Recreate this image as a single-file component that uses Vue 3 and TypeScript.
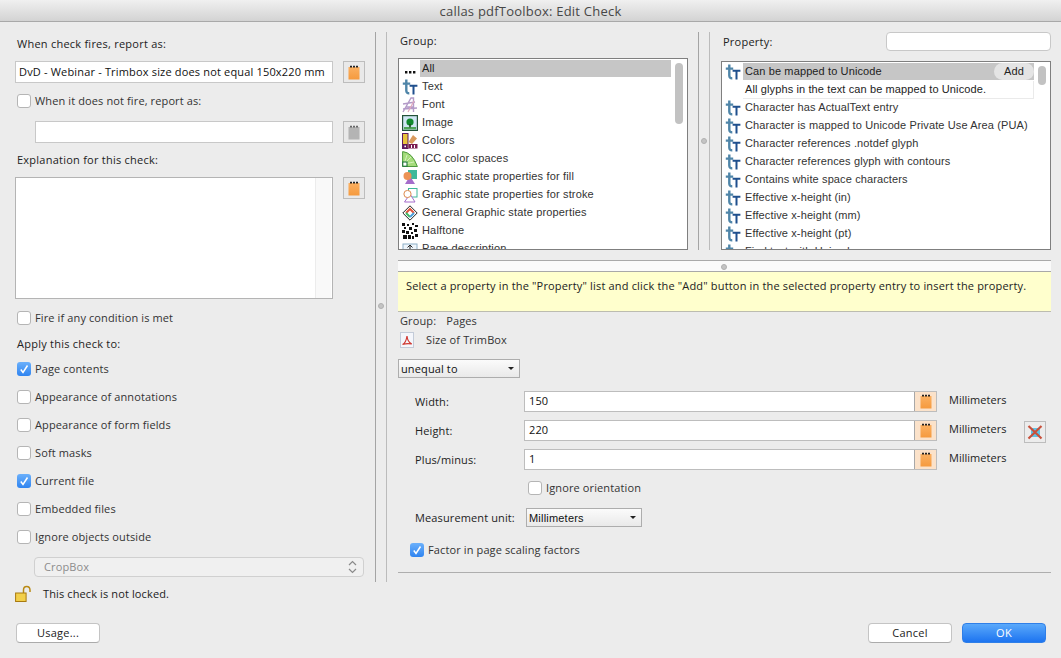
<script setup lang="ts">
const groups = [
  { icon: 'dots', label: 'All', selected: true },
  { icon: 'text', label: 'Text' },
  { icon: 'font', label: 'Font' },
  { icon: 'image', label: 'Image' },
  { icon: 'colors', label: 'Colors' },
  { icon: 'icc', label: 'ICC color spaces' },
  { icon: 'fill', label: 'Graphic state properties for fill' },
  { icon: 'stroke', label: 'Graphic state properties for stroke' },
  { icon: 'general', label: 'General Graphic state properties' },
  { icon: 'halftone', label: 'Halftone' },
  { icon: 'page', label: 'Page description' },
]
const properties = [
  'Character has ActualText entry',
  'Character is mapped to Unicode Private Use Area (PUA)',
  'Character references .notdef glyph',
  'Character references glyph with contours',
  'Contains white space characters',
  'Effective x-height (in)',
  'Effective x-height (mm)',
  'Effective x-height (pt)',
  'Find text with Unicode sequence',
]
const scopes = [
  { label: 'Page contents', on: true },
  { label: 'Appearance of annotations', on: false },
  { label: 'Appearance of form fields', on: false },
  { label: 'Soft masks', on: false },
  { label: 'Current file', on: true },
  { label: 'Embedded files', on: false },
  { label: 'Ignore objects outside', on: false },
]
const values = [
  { label: 'Width:', value: '150' },
  { label: 'Height:', value: '220' },
  { label: 'Plus/minus:', value: '1' },
]
</script>

<template>
  <div class="window">
    <svg class="defs" width="0" height="0" aria-hidden="true">
      <defs>
        <linearGradient id="org" x1="0" y1="0" x2="0" y2="1"><stop offset="0" stop-color="#fbb061" /><stop offset="1" stop-color="#f59a3e" /></linearGradient>
        <symbol id="i-note" viewBox="0 0 14 15">
          <rect x="1.500" y="2" width="11" height="12.500" fill="url(#org)" />
          <path d="M3 .8h2v1.800H3zM6 .8h2v1.800H6zM9 .8h2v1.800H9z" fill="#222" />
        </symbol>
        <symbol id="i-note-off" viewBox="0 0 14 15">
          <rect x="1.500" y="2" width="11" height="12.500" fill="#b4b4b4" />
          <path d="M3 .8h2v1.800H3zM6 .8h2v1.800H6zM9 .8h2v1.800H9z" fill="#666" />
        </symbol>
        <symbol id="i-dots" viewBox="0 0 16 16"><path d="M3 10h2.400v2.400H3zM7 10h2.400v2.400H7zM11 10h2.400v2.400H11z" fill="#111" /></symbol>
        <symbol id="i-text" viewBox="0 0 16 16">
          <path d="M.8 4.600h7.400M4.300 .6v10.800q0 3 3 2.800" fill="none" stroke="#4f85a8" stroke-width="2.400" />
          <path d="M7.600 6.800h7.800M11.500 6.800v8.800" fill="none" stroke="#1f4f8d" stroke-width="2" />
        </symbol>
        <symbol id="i-font" viewBox="0 0 16 16">
          <path d="M1 15 9 1h2.500v14M4 10h8M1 7l12-2M1 12l14-1" fill="none" stroke="#b39ac8" stroke-width="1.400" />
          <path d="M6 15 12 4" stroke="#e0a8bc" stroke-width="1.200" />
        </symbol>
        <symbol id="i-image" viewBox="0 0 16 16">
          <rect x=".6" y=".6" width="14.800" height="14.800" fill="#cfe6f4" stroke="#23533a" stroke-width="1.200" />
          <rect x="2" y="12" width="12" height="2.400" fill="#4fa659" />
          <circle cx="8" cy="7" r="3.600" fill="#118a2e" />
          <rect x="7.200" y="9" width="1.600" height="3.400" fill="#1a4a1e" />
        </symbol>
        <symbol id="i-colors" viewBox="0 0 16 16">
          <rect x=".5" y=".5" width="5.500" height="15" fill="#e8c33c" stroke="#5e1a5e" stroke-width="1" />
          <rect x="1" y="11" width="4.500" height="4.500" fill="#5e1a5e" />
          <rect x="2.400" y="12.600" width="1.600" height="1.600" fill="#fff" />
          <path d="M6.500 9 11 2l4 3.500-5 5.500z" fill="#d99a5d" />
          <path d="M6.500 15.500V11h9v4.500z" fill="#7b1d52" />
          <path d="M9.500 12v3M12.500 12v3" stroke="#fff" />
        </symbol>
        <symbol id="i-icc" viewBox="0 0 16 16">
          <path d="M.6 15.500V.6q9.500.6 14.800 14.900z" fill="#a5dc7c" stroke="#4f9a3e" />
          <path d="M2 13 9 6M2 13l10-2M2 13l3-9" stroke="#d9f2c4" stroke-width=".9" />
          <rect x=".8" y="11" width="4.200" height="4.200" fill="#fff" stroke="#0f6a2c" />
        </symbol>
        <symbol id="i-fill" viewBox="0 0 16 16">
          <rect x="6" y="1" width="9" height="9" fill="#3fb89a" />
          <path d="M3 15 8 7l5 8z" fill="#a56dcb" />
          <circle cx="5.500" cy="7" r="4" fill="#ec9255" />
        </symbol>
        <symbol id="i-stroke" viewBox="0 0 16 16">
          <rect x="6.500" y="1.500" width="8.500" height="8.500" fill="#fff" stroke="#3fb89a" />
          <path d="M2.500 15 8 7l5 8z" fill="#fff" stroke="#a56dcb" />
          <circle cx="5.500" cy="7" r="3.600" fill="#fff" stroke="#dd8a4e" />
        </symbol>
        <symbol id="i-general" viewBox="0 0 16 16">
          <path d="M8 .8 15.200 8 8 15.200.8 8z" fill="#fff" stroke="#222" stroke-width="1" />
          <path d="M4 8l4-4 4 4" fill="none" stroke="#e2553d" stroke-width="2" />
          <path d="M4 8l4 4" fill="none" stroke="#3dbb62" stroke-width="2" />
          <path d="M12 8l-4 4" fill="none" stroke="#4aa0dd" stroke-width="2" />
        </symbol>
        <symbol id="i-halftone" viewBox="0 0 16 16">
          <rect width="16" height="16" fill="#fff" />
          <path d="M0 0h3v3H0zM5 1h2v2H5zM10 0h2v2h-2zM13 2h3v2h-3zM2 4h2v2H2zM7 4h3v3H7zM12 6h3v3h-3zM0 7h3v3H0zM4 8h3v3H4zM9 9h2v2H9zM13 11h3v3h-3zM1 12h4v4H1zM6 12h3v4H6zM10 13h2v3h-2z" fill="#111" />
        </symbol>
        <symbol id="i-page" viewBox="0 0 16 16">
          <rect x="1" y="3" width="14" height="13" fill="#eef5fb" stroke="#8eb0c8" />
          <path d="M8 4v6M5.500 6.500 8 4l2.500 2.500" fill="none" stroke="#222" />
        </symbol>
        <symbol id="i-pdf" viewBox="0 0 14 16">
          <rect x=".5" y=".5" width="13" height="15" fill="#f4f6fb" stroke="#c3cbd8" />
          <path d="M2.500 12.500Q6 11 7 4q.6 6 4.800 8-5-.8-9.300.5z" fill="none" stroke="#d03a33" stroke-width="1.200" />
        </symbol>
        <symbol id="i-x" viewBox="0 0 16 16">
          <rect x="4" y="4" width="9" height="9" fill="#5fc4e6" />
          <path d="M1.500 2 14.500 14.500M14.500 2 1.500 14.500" stroke="#c8503c" stroke-width="2.200" />
        </symbol>
      </defs>
    </svg>

    <header class="titlebar">callas pdfToolbox: Edit Check</header>

    <div class="content">
      <aside class="left">
        <div class="label first">When check fires, report as:</div>
        <div class="field-row r-a">
          <div class="input wide">DvD - Webinar - Trimbox size does not equal 150x220 mm</div>
          <button class="note-btn"><svg class="note"><use href="#i-note" /></svg></button>
        </div>
        <label class="check r-b"><span class="box"></span>When it does not fire, report as:</label>
        <div class="field-row r-c">
          <div class="input inset"></div>
          <button class="note-btn"><svg class="note"><use href="#i-note-off" /></svg></button>
        </div>
        <div class="label r-d">Explanation for this check:</div>
        <div class="field-row r-e">
          <div class="textarea"><span class="track"></span></div>
          <button class="note-btn"><svg class="note"><use href="#i-note" /></svg></button>
        </div>
        <label class="check r-f"><span class="box"></span>Fire if any condition is met</label>
        <div class="label r-g">Apply this check to:</div>
        <div class="scopes">
          <label v-for="s in scopes" :key="s.label" class="check">
            <span class="box" :class="{ on: s.on }">
              <svg v-if="s.on" viewBox="0 0 14 14"><path d="M3.800 7.500 6 10.500 10.500 3.500" fill="none" stroke="#fff" stroke-width="1.500" /></svg>
            </span>{{ s.label }}
          </label>
        </div>
        <div class="stepper">
          <span>CropBox</span>
          <svg width="9" height="14" viewBox="0 0 9 14"><path d="M1 5l3.500-3.500L8 5M1 9l3.500 3.500L8 9" fill="none" stroke="#8a8a8a" stroke-width="1.200" /></svg>
        </div>
        <div class="lock">
          <svg width="17" height="18" viewBox="0 0 17 18">
            <path d="M8.500 8V5q0-3.500 3.200-3.500T15 5v2" fill="none" stroke="#b98a14" stroke-width="1.500" />
            <rect x=".6" y="8" width="10.500" height="8.500" fill="#f2cf4a" stroke="#a87a10" />
          </svg>
          <span>This check is not locked.</span>
        </div>
      </aside>

      <div class="vsplit long"><span class="grip"></span></div>

      <main class="right">
        <section class="lists">
          <div class="col group-col">
            <div class="label group-label">Group:</div>
            <div class="list group-list">
              <div v-for="g in groups" :key="g.label" class="item">
                <svg class="ico"><use :href="'#i-' + g.icon" /></svg>
                <span class="txt" :class="{ sel: g.selected }">{{ g.label }}</span>
              </div>
              <span class="thumb tall"></span>
            </div>
          </div>
          <div class="vsplit short"><span class="grip"></span></div>
          <div class="col prop-col">
            <div class="prop-head">
              <span class="label">Property:</span>
              <div class="search"></div>
            </div>
            <div class="list prop-list">
              <div class="item">
                <svg class="ico"><use href="#i-text" /></svg>
                <span class="txt sel">Can be mapped to Unicode<b class="add">Add</b></span>
              </div>
              <div class="desc">All glyphs in the text can be mapped to Unicode.</div>
              <div v-for="p in properties" :key="p" class="item">
                <svg class="ico"><use href="#i-text" /></svg>
                <span class="txt">{{ p }}</span>
              </div>
              <span class="thumb small"></span>
            </div>
          </div>
        </section>

        <div class="hsplit"><span class="grip"></span></div>
        <div class="hint">Select a property in the "Property" list and click the "Add" button in the selected property entry to insert the property.</div>

        <div class="group-line"><span>Group:</span><span>Pages</span></div>
        <div class="size-line">
          <svg width="14" height="16"><use href="#i-pdf" /></svg>
          <span>Size of TrimBox</span>
        </div>
        <div class="pop op"><span>unequal to</span><i></i></div>

        <div class="values">
          <template v-for="v in values" :key="v.label">
            <span class="v-label">{{ v.label }}</span>
            <div class="v-input">
              <span class="v-text">{{ v.value }}</span>
              <span class="v-note"><svg class="note"><use href="#i-note" /></svg></span>
            </div>
            <span class="v-unit">Millimeters</span>
          </template>
          <button class="x-btn"><svg width="16" height="16"><use href="#i-x" /></svg></button>
        </div>

        <label class="check ignore"><span class="box"></span>Ignore orientation</label>
        <div class="unit-row">
          <span class="unit-label">Measurement unit:</span>
          <div class="pop unit"><span>Millimeters</span><i></i></div>
        </div>
        <label class="check factor">
          <span class="box on"><svg viewBox="0 0 14 14"><path d="M3.800 7.500 6 10.500 10.500 3.500" fill="none" stroke="#fff" stroke-width="1.500" /></svg></span>Factor in page scaling factors
        </label>
        <div class="rule"></div>
      </main>
    </div>

    <footer class="footer">
      <button class="btn">Usage...</button>
      <div class="actions">
        <button class="btn">Cancel</button>
        <button class="btn primary">OK</button>
      </div>
    </footer>
  </div>
</template>

<style>
html, body { margin: 0; background: #ececec; }
</style>

<style scoped>
.window {
  width: 1061px;
  height: 658px;
  overflow: hidden;
  display: flex;
  flex-direction: column;
  background: #ececec;
  color: #2a2a2a;
  font: 11px/16px "Open Sans", "Liberation Sans", sans-serif;
  letter-spacing: .12px;
}
.defs { position: absolute; }
.titlebar {
  height: 21px;
  flex: none;
  border-bottom: 1px solid #a9a9a9;
  background: linear-gradient(#f0f0f0, #d3d3d3);
  text-align: center;
  font-size: 13px;
  letter-spacing: .22px;
  line-height: 22px;
  color: #474747;
}
.content { flex: 1; display: flex; min-height: 0; }
.left { width: 375px; flex: none; padding-left: 15px; box-sizing: border-box; }
.label { padding-left: 2px; height: 16px; letter-spacing: .24px; color: #222; }
.first { margin-top: 14px; }
.field-row { display: flex; gap: 10px; align-items: flex-start; }
.r-a { margin-top: 9px; }
.r-b { margin-top: 11px; }
.r-c { margin-top: 13px; }
.r-d { margin-top: 9px; }
.r-e { margin-top: 9px; }
.r-f { margin-top: 12px; }
.r-g { margin-top: 11px; }
.input {
  box-sizing: border-box;
  height: 22px;
  background: #fff;
  border: 1px solid #c8c8c8;
  line-height: 20px;
  padding-left: 3px;
  color: #111;
}
.wide { width: 318px; letter-spacing: .17px; }
.inset { width: 298px; margin-left: 20px; }
.note-btn {
  box-sizing: border-box;
  width: 22px;
  height: 22px;
  padding: 0;
  border: 1px solid #bdbdbd;
  background: #e9e9e9;
  display: flex;
  align-items: center;
  justify-content: center;
}
.note { width: 14px; height: 15px; display: block; }
.textarea {
  box-sizing: border-box;
  width: 318px;
  height: 122px;
  background: #fff;
  border: 1px solid #b4b4b4;
  display: flex;
  justify-content: flex-end;
}
.track { width: 15px; margin-right: 1px; background: #f9f9f9; border-left: 1px solid #ececec; }
.check {
  display: flex;
  align-items: center;
  height: 14px;
  margin-left: 2px;
  color: #333;
}
.box {
  box-sizing: border-box;
  width: 14px;
  height: 14px;
  flex: none;
  margin-right: 4px;
  background: #fff;
  border: 1px solid #b5b5b5;
  border-radius: 3px;
  display: block;
}
.box.on { border: 0; background: linear-gradient(#6bb0fb, #2f84f0); }
.box svg { width: 14px; height: 14px; display: block; }
.scopes { margin-top: 10px; display: grid; grid-auto-rows: 14px; row-gap: 14px; }
.scopes .check { margin-left: 2px; }
.stepper {
  box-sizing: border-box;
  width: 330px;
  height: 20px;
  margin: 13px 0 0 19px;
  padding: 0 6px 0 9px;
  display: flex;
  align-items: center;
  justify-content: space-between;
  border: 1px solid #d0d0d0;
  border-radius: 4px;
  background: #f0f0f0;
  color: #8c8c8c;
}
.lock { margin-top: 8px; display: flex; align-items: center; height: 18px; }
.lock span { margin-left: 11px; color: #222; }
.vsplit {
  position: relative;
  box-sizing: border-box;
  width: 12px;
  flex: none;
  margin-top: 10px;
  border-left: 1px solid #a4a4a4;
  border-right: 1px solid #bbb;
}
.vsplit.long { height: 550px; }
.vsplit.short { height: 218px; margin-left: 10px; }
.grip {
  position: absolute;
  width: 6px;
  height: 6px;
  border-radius: 50%;
  background: #c4c4c4;
  border: 1px solid #b0b0b0;
  box-sizing: border-box;
}
.vsplit.long .grip { left: 2px; top: 271px; }
.vsplit.short .grip { left: 2px; top: 106px; }
.right { flex: 1; min-width: 0; padding: 0 10px 0 11px; display: flex; flex-direction: column; }
.lists { display: flex; height: 228px; flex: none; }
.col { display: flex; flex-direction: column; }
.group-col { width: 290px; }
.prop-col { width: 330px; margin-left: 11px; }
.group-label { margin-top: 11px; }
.prop-head { margin-top: 10px; height: 19px; display: flex; justify-content: space-between; align-items: center; }
.search {
  box-sizing: border-box;
  width: 165px;
  height: 19px;
  border: 1px solid #c8c8c8;
  border-radius: 4px;
  background: #fff;
}
.list {
  position: relative;
  box-sizing: border-box;
  overflow: hidden;
  background: #fff;
  border: 1px solid #7f7f7f;
  padding-top: 1px;
  font-family: "Liberation Sans", Arial, sans-serif;
  letter-spacing: .12px;
}
.group-list { margin-top: 9px; height: 192px; letter-spacing: .16px; }
.prop-list { margin-top: 10px; height: 189px; }
.item { display: flex; height: 18px; align-items: center; padding-left: 3px; }
.ico { width: 16px; height: 16px; flex: none; display: block; }
.txt { margin-left: 2px; height: 18px; line-height: 16px; padding-left: 2px; flex: 1; white-space: nowrap; color: #333; }
.group-list .txt { margin-right: 16px; }
.prop-list .txt { margin-right: 16px; }
.sel { background: #c6c6c6; color: #222; position: relative; height: 17px; align-self: flex-start; }
.add {
  position: absolute;
  right: 0;
  top: 0;
  width: 40px;
  height: 17px;
  border-radius: 9px;
  background: #e4e4e4;
  text-align: center;
  font-weight: 400;
  color: #222;
}
.desc {
  box-sizing: border-box;
  margin: 0 16px 0 21px;
  padding-left: 2px;
  height: 18px;
  line-height: 16px;
  border-bottom: 1px solid #eaeaea;
  border-right: 1px solid #eaeaea;
  color: #222;
}
.thumb { position: absolute; width: 8px; border-radius: 4px; background: #c2c2c2; }
.tall { left: 276px; top: 4px; height: 61px; }
.small { left: 316px; top: 4px; height: 19px; }
.hsplit {
  position: relative;
  flex: none;
  box-sizing: border-box;
  height: 11px;
  margin-top: 10px;
  border-top: 1px solid #a9a9a9;
  background: #fafafa;
}
.hsplit .grip { left: 323px; top: 3px; }
.hint {
  box-sizing: border-box;
  flex: none;
  height: 41px;
  padding: 6px 0 0 8px;
  background: #ffffcd;
  border-top: 1px solid #a8a8a8;
  border-bottom: 1px solid #bcbcb0;
  color: #222;
  white-space: nowrap;
  letter-spacing: .17px;
}
.group-line { margin: 1px 0 0 2px; display: flex; gap: 10px; height: 16px; color: #333; }
.size-line { margin: 3px 0 0 2px; height: 16px; display: flex; align-items: center; gap: 12px; color: #333; }
.pop {
  box-sizing: border-box;
  height: 19px;
  border: 1px solid #adadad;
  background: linear-gradient(#fbfbfb, #e9e9e9);
  display: flex;
  align-items: center;
  justify-content: space-between;
  padding: 0 5px 0 2px;
  color: #111;
}
.pop i {
  width: 0;
  height: 0;
  border-left: 3px solid transparent;
  border-right: 3px solid transparent;
  border-top: 3px solid #222;
}
.op { width: 122px; margin-top: 11px; flex: none; }
.values {
  margin-top: 13px;
  padding-left: 17px;
  display: grid;
  grid-template-columns: 109px 413px 87px 22px;
  column-gap: 0;
  grid-auto-rows: 21px;
  row-gap: 8px;
  align-items: center;
}
.v-label { color: #222; }
.v-input {
  box-sizing: border-box;
  height: 21px;
  display: flex;
  border: 1px solid #bdbdbd;
  background: #fff;
  justify-content: space-between;
}
.v-text { padding-left: 4px; line-height: 18px; color: #111; }
.v-note {
  box-sizing: border-box;
  width: 22px;
  background: #fbe2ca;
  border-left: 1px solid #a8a8a8;
  display: flex;
  align-items: center;
  justify-content: center;
}
.v-unit { padding-left: 12px; margin-top: -3px; color: #222; letter-spacing: .02px; }
.x-btn {
  grid-column: 4;
  grid-row: 1 / 4;
  margin-top: 2px;
  box-sizing: border-box;
  width: 22px;
  height: 22px;
  padding: 0;
  border: 1px solid #bdbdbd;
  background: #ececec;
  display: flex;
  align-items: center;
  justify-content: center;
}
.ignore { margin: 11px 0 0 130px; }
.unit-row { margin: 13px 0 0 17px; display: flex; align-items: center; height: 19px; color: #222; }
.unit-label { width: 111px; flex: none; }
.unit { width: 116px; padding-left: 2px; font-family: "Liberation Sans", Arial, sans-serif; letter-spacing: .2px; }
.factor { margin: 16px 0 1px 12px; }
.rule { margin-top: 14px; border-top: 1px solid #aeaeae; }
.footer {
  flex: none;
  height: 46px;
  padding: 11px 15px 0 16px;
  box-sizing: border-box;
  display: flex;
  justify-content: space-between;
}
.actions { display: flex; gap: 10px; }
.btn {
  box-sizing: border-box;
  width: 84px;
  height: 20px;
  padding: 0 0 2px;
  border: 1px solid #c4c4c4;
  border-bottom-color: #ababab;
  border-radius: 4px;
  background: #fff;
  font: inherit;
  letter-spacing: .24px;
  line-height: 15px;
  color: #222;
}
.primary { border-color: #2f7fe8; background: linear-gradient(#5aa9fb, #1d74f0); color: #fff; }
</style>
